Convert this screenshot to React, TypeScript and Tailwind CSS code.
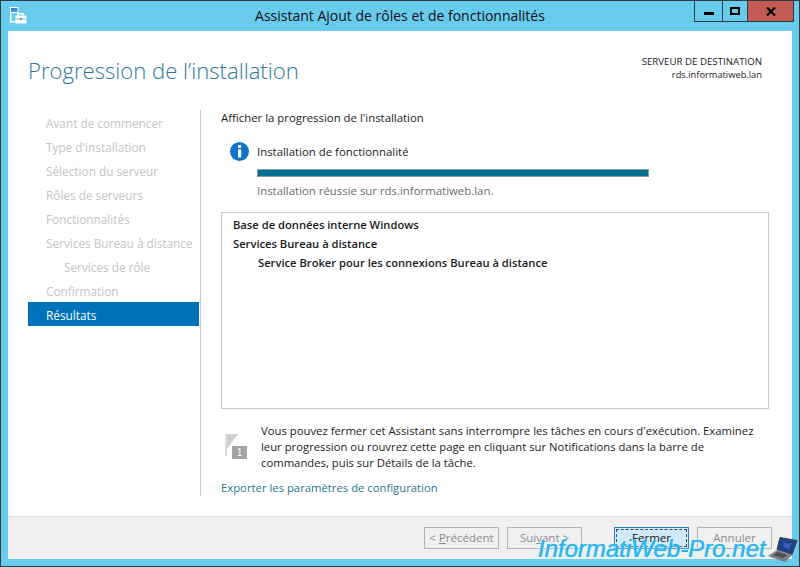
import React from 'react';

const steps = [
  { label: 'Avant de commencer' },
  { label: "Type d'installation" },
  { label: 'Sélection du serveur' },
  { label: 'Rôles de serveurs' },
  { label: 'Fonctionnalités' },
  { label: 'Services Bureau à distance' },
  { label: 'Services de rôle', sub: true },
  { label: 'Confirmation' },
];

function AppIcon() {
  return (
    <svg width="17" height="17" viewBox="0 0 17 17" className="block">
      <path d="M0.7 0.7h7v14h-7z" fill="none" stroke="#fff" strokeWidth="1.4" />
      <path d="M1 1h6.5v4H1z" fill="#3a8fd8" />
      <path d="M1 5.5h6.5" stroke="#fff" strokeWidth="1.2" />
      <path d="M5.5 8.5h11v8h-11z" fill="#fff" />
      <path d="M8.5 8.5V6.7h5v1.8" fill="none" stroke="#fff" strokeWidth="1.3" />
      <path d="M5.5 12h11" stroke="#69cbec" strokeWidth="1" />
      <path d="M10 11h2v2h-2z" fill="#5a8fb0" />
    </svg>
  );
}

function NotifyFlag() {
  return (
    <svg width="22" height="25" viewBox="0 0 22 25" className="block">
      <path d="M1 0v22" stroke="#dcdcdc" strokeWidth="2" />
      <path d="M2 0h11L2 15z" fill="#cfcfcf" />
      <rect x="7" y="12" width="15" height="13" fill="#a3a3a3" />
      <text x="14.5" y="22" fontSize="10" textAnchor="middle" fill="#fff" fontFamily="Liberation Sans, sans-serif">1</text>
    </svg>
  );
}

function Laptop() {
  return (
    <svg width="30" height="25" viewBox="0 0 30 25" className="block">
      <path d="M12 0.5l17 3-5 14-15-5z" fill="#1f3f86" stroke="#3a3f46" strokeWidth="1" />
      <path d="M15 4l5 3 4-2-3 8-5-3z" fill="#3560b8" />
      <path d="M0 19l9-6 15 5-7 7z" fill="#7a8084" />
      <path d="M5 18l5-3 9 3-4 3z" fill="#4a4f53" />
    </svg>
  );
}

function WizardButton({ label, disabled, primary }: { label: React.ReactNode; disabled?: boolean; primary?: boolean }) {
  if (primary) {
    return (
      <div className="h-[22px] w-[75px] border border-[#2f7fb5] bg-[#d0e9f8] p-px">
        <div className="flex h-full items-center justify-center border border-dashed border-[#33505f] text-[#111]">{label}</div>
      </div>
    );
  }
  return (
    <div className={`flex h-[22px] w-[75px] items-center justify-center border border-[#b4b4b4] bg-[#f0f0f0] ${disabled ? 'text-[#8c8c8c]' : ''}`}>
      {label}
    </div>
  );
}

export default function App() {
  return (
    <div className="relative flex h-[567px] w-[800px] flex-col overflow-hidden border border-[#2f3b45] bg-[#69cbec] font-['Open_Sans',sans-serif] text-[11.4px] text-[#222]">
      {/* title bar */}
      <div className="relative flex h-[30px] shrink-0 items-center justify-center pb-[1px]">
        <div className="absolute left-[9px] top-[6px]">
          <AppIcon />
        </div>
        <span className="text-[14px] text-[#111]">Assistant Ajout de rôles et de fonctionnalités</span>
        <div className="absolute right-[5px] top-0 flex h-[21px] border-x border-b border-[#2f3b45]">
          <div className="flex w-[28px] items-end justify-center border-r border-[#2f3b45] pb-[6px]">
            <div className="h-[3px] w-[10px] bg-black" />
          </div>
          <div className="flex w-[25px] items-center justify-center border-r border-[#2f3b45]">
            <div className="h-[8px] w-[10px] border-2 border-black" />
          </div>
          <div className="flex w-[45px] items-center justify-center bg-[#c25b52]">
            <svg width="10" height="9" viewBox="0 0 10 9"><path d="M1 0.5l8 8M9 0.5l-8 8" stroke="#000" strokeWidth="2.2" /></svg>
          </div>
        </div>
      </div>

      {/* client area */}
      <div className="mx-[7px] flex min-h-0 flex-1 flex-col bg-white">
        <div className="flex h-[79px] shrink-0 justify-between pl-5 pr-[30px]">
          <h1 className="pt-[17px] text-[22.1px] font-light leading-[44px] text-[#2b7a9b]">Progression de l’installation</h1>
          <div className="pt-[24px] text-right text-[9.7px] leading-[13px]">
            <div>SERVEUR DE DESTINATION</div>
            <div className="text-[9.3px]">rds.informatiweb.lan</div>
          </div>
        </div>

        <div className="flex min-h-0 flex-1 pl-5">
          <nav className="h-[386px] w-[171px] shrink-0 text-[11.8px]">
            {steps.map((s) => (
              <div key={s.label} className={`flex h-[24px] items-center pt-[4px] text-[#c4c4c4] ${s.sub ? 'pl-9' : 'pl-[18px]'}`}>
                {s.label}
              </div>
            ))}
            <div className="flex h-[24px] items-center bg-[#0072bc] pl-[18px] pt-[4px] text-white">Résultats</div>
          </nav>
          <div className="ml-px h-[386px] w-px shrink-0 bg-[#c8c8c8]" />

          <main className="ml-5 flex h-[386px] w-[548px] flex-col">
            <div className="flex h-[16px] shrink-0 items-center">Afficher la progression de l'installation</div>
            <div className="ml-[9px] mt-[16px] flex shrink-0 items-center gap-[8px]">
              <svg width="19" height="19" viewBox="0 0 19 19">
                <circle cx="9.5" cy="9.5" r="9.5" fill="#0f74c9" />
                <rect x="8" y="3" width="3.2" height="3" fill="#fff" />
                <rect x="8" y="7.5" width="3.2" height="8" fill="#fff" />
              </svg>
              <span>Installation de fonctionnalité</span>
            </div>
            <div className="ml-[36px] mt-[8px] h-[8px] w-[392px] shrink-0 border border-[#8a9aa2] bg-[#00728f]" />
            <div className="ml-[36px] mt-[5px] shrink-0 text-[#6b6b6b]">Installation réussie sur rds.informatiweb.lan.</div>
            <div className="mt-[13px] h-[197px] shrink-0 border border-[#c8c8c8] px-[11px] pt-[2px] text-[11.2px] font-semibold leading-[19px] text-[#1a1a1a]">
              <div>Base de données interne Windows</div>
              <div>Services Bureau à distance</div>
              <div className="pl-[25px]">Service Broker pour les connexions Bureau à distance</div>
            </div>
            <div className="mt-[14px] flex shrink-0 gap-[14px] pl-[4px]">
              <div className="pt-[11px]">
                <NotifyFlag />
              </div>
              <p className="whitespace-nowrap text-[11.3px] leading-[16px]">
                Vous pouvez fermer cet Assistant sans interrompre les tâches en cours d'exécution. Examinez
                <br />
                leur progression ou rouvrez cette page en cliquant sur Notifications dans la barre de
                <br />
                commandes, puis sur Détails de la tâche.
              </p>
            </div>
            <div className="mt-[9px] shrink-0 text-[11.3px] text-[#1f7a8c]">Exporter les paramètres de configuration</div>
          </main>
        </div>

        {/* footer */}
        <div className="flex h-[43px] shrink-0 items-start gap-[8px] border-t border-[#dcdcdc] bg-[#f0f0f0] pl-[416px] pt-[10px] text-[11.5px]">
          <WizardButton disabled label={<span>&lt; <u>P</u>récédent</span>} />
          <WizardButton disabled label={<span>Sui<u>v</u>ant &gt;</span>} />
          <div className="ml-[24px]">
            <WizardButton primary label="Fermer" />
          </div>
          <WizardButton disabled label="Annuler" />
        </div>
      </div>
      <div className="h-[7px] shrink-0" />

      {/* watermark */}
      <div className="absolute left-[537px] top-[531px] font-['Liberation_Sans',sans-serif] text-[24px] italic leading-[34px] text-[#2bb5f2] [text-shadow:0_0_1px_#2bb5f2,0_0_3px_#fff]">
        InformatiWeb-Pro.net
      </div>
      <div className="absolute left-[767px] top-[536px]">
        <Laptop />
      </div>
    </div>
  );
}
